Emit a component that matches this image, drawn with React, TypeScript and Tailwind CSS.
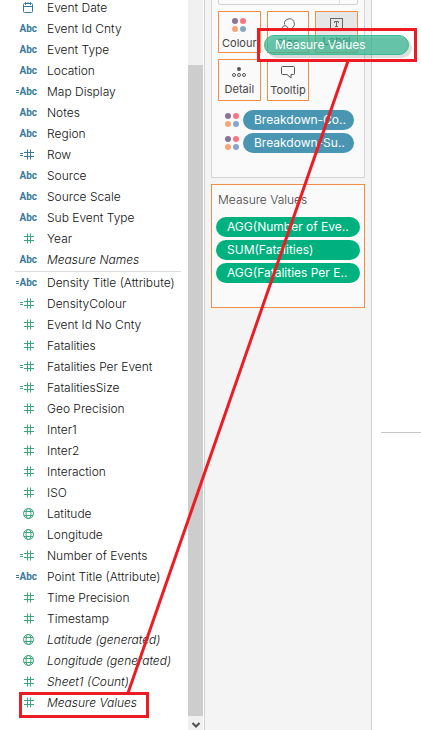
import type { ReactNode } from "react";

type IconKind = "date" | "abc" | "number" | "globe";

interface Field {
  name: string;
  icon: IconKind;
  tone?: "blue" | "green";
  calculated?: boolean;
  generated?: boolean;
}

const dimensions: Field[] = [
  { name: "Event Date", icon: "date" },
  { name: "Event Id Cnty", icon: "abc" },
  { name: "Event Type", icon: "abc" },
  { name: "Location", icon: "abc" },
  { name: "Map Display", icon: "abc", calculated: true },
  { name: "Notes", icon: "abc" },
  { name: "Region", icon: "abc" },
  { name: "Row", icon: "number", calculated: true },
  { name: "Source", icon: "abc" },
  { name: "Source Scale", icon: "abc" },
  { name: "Sub Event Type", icon: "abc" },
  { name: "Year", icon: "number", tone: "green" },
  { name: "Measure Names", icon: "abc", generated: true },
];

const measures: Field[] = [
  { name: "Density Title (Attribute)", icon: "abc", tone: "blue", calculated: true },
  { name: "DensityColour", icon: "number", calculated: true },
  { name: "Event Id No Cnty", icon: "number" },
  { name: "Fatalities", icon: "number" },
  { name: "Fatalities Per Event", icon: "number", calculated: true },
  { name: "FatalitiesSize", icon: "number", calculated: true },
  { name: "Geo Precision", icon: "number" },
  { name: "Inter1", icon: "number" },
  { name: "Inter2", icon: "number" },
  { name: "Interaction", icon: "number" },
  { name: "ISO", icon: "number" },
  { name: "Latitude", icon: "globe" },
  { name: "Longitude", icon: "globe" },
  { name: "Number of Events", icon: "number", calculated: true },
  { name: "Point Title (Attribute)", icon: "abc", tone: "blue", calculated: true },
  { name: "Time Precision", icon: "number" },
  { name: "Timestamp", icon: "number" },
  { name: "Latitude (generated)", icon: "globe", generated: true },
  { name: "Longitude (generated)", icon: "globe", generated: true },
  { name: "Sheet1 (Count)", icon: "number", generated: true },
  { name: "Measure Values", icon: "number", generated: true },
];

function EqualsMark() {
  return (
    <svg width="3" height="5" viewBox="0 0 3 5" fill="currentColor" aria-hidden="true">
      <path d="M0 1h3v1H0zM0 3h3v1H0z" />
    </svg>
  );
}

function FieldIcon({ icon }: { icon: IconKind }) {
  if (icon === "abc") {
    return <span className="font-[Roboto,sans-serif] text-[10px] leading-[21px] font-bold">Abc</span>;
  }
  if (icon === "date") {
    return (
      <svg className="mr-[3px]" width="11" height="11" viewBox="0 0 11 11" fill="none" stroke="currentColor" aria-hidden="true">
        <rect x="0.5" y="1.5" width="9" height="9" rx="1" />
        <path d="M0.5 4.5h9M2.5 0v3M5 0v2M7.5 0v3" />
      </svg>
    );
  }
  if (icon === "globe") {
    return (
      <svg className="mr-[3px]" width="11" height="11" viewBox="0 0 11 11" fill="none" stroke="currentColor" aria-hidden="true">
        <circle cx="5.5" cy="5.5" r="5" />
        <ellipse cx="5.5" cy="5.5" rx="2.4" ry="5" />
        <path d="M1 3.5h9M1 7.5h9" />
      </svg>
    );
  }
  return (
    <svg className="mr-[3px]" width="11" height="11" viewBox="0 0 11 11" fill="none" stroke="currentColor" aria-hidden="true">
      <path d="M4.5 0.5v10M7.5 0.5v10M1 3.5h10M1 7.5h10" />
    </svg>
  );
}

function FieldList({ label, fields, tone }: { label: string; fields: Field[]; tone: "blue" | "green" }) {
  return (
    <ul aria-label={label}>
      {fields.map((field) => (
        <li key={field.name} className="flex h-[21px] items-center gap-[10px] whitespace-nowrap">
          <span
            className={`flex w-[37px] shrink-0 items-center justify-end ${
              (field.tone ?? tone) === "blue" ? "text-[#38799a]" : "text-[#3ba57c]"
            }`}
          >
            {field.calculated && <EqualsMark />}
            <FieldIcon icon={field.icon} />
          </span>
          <span className={field.generated ? "italic" : ""}>{field.name}</span>
        </li>
      ))}
    </ul>
  );
}

function ColourDots() {
  return (
    <svg width="14" height="14" viewBox="0 0 14 14" aria-hidden="true">
      <circle cx="3" cy="3" r="3" fill="#8a7399" />
      <circle cx="11" cy="3" r="3" fill="#f9767f" />
      <circle cx="3" cy="11" r="3" fill="#f4a77c" />
      <circle cx="11" cy="11" r="3" fill="#86a6cd" />
    </svg>
  );
}

function MarkButton({ label, active, children }: { label: string; active?: boolean; children: ReactNode }) {
  return (
    <button
      type="button"
      className={`flex h-[42px] flex-col items-center border border-[#ee8e48] pt-[6px] text-[11px] font-normal text-[#444] ${
        active ? "bg-[#e6e6e6]" : "bg-[#fafafa]"
      }`}
    >
      <span className="flex h-[15px] items-center">{children}</span>
      <span className="leading-[22px]">{label}</span>
    </button>
  );
}

function Pill({ tone, children }: { tone: "blue" | "green"; children: ReactNode }) {
  return (
    <button
      type="button"
      className={`h-[20px] w-full truncate rounded-full pl-[11px] text-left leading-[20px] font-normal text-white ${
        tone === "blue" ? "bg-[#4996b2]" : "bg-[#00b180]"
      }`}
    >
      {children}
    </button>
  );
}

export default function App() {
  return (
    <div className="relative flex h-screen overflow-hidden bg-white font-[Inter,'Liberation_Sans',sans-serif] text-[12px] font-light text-[#111]">
      <section aria-label="Data" className="w-[188px] shrink-0 overflow-hidden">
        <div className="-mt-[3px]">
          <FieldList label="Dimensions" fields={dimensions} tone="blue" />
          <hr className="mt-px mr-[7px] ml-[15px] border-[#dcdcdc]" />
          <FieldList label="Measures" fields={measures} tone="green" />
        </div>
      </section>

      <div className="flex w-[15px] shrink-0 flex-col bg-[#f0f0f0] pt-[65px]">
        <div className="flex-1 bg-[#cdcdcd]" />
        <div className="flex h-[14px] items-center justify-center pt-[3px]">
          <svg width="8" height="6" viewBox="0 0 8 6" fill="none" stroke="#505050" strokeWidth="2" aria-hidden="true">
            <path d="M0.5 1L4 4.5L7.5 1" />
          </svg>
        </div>
      </div>

      <aside className="ml-px w-[168px] shrink-0 overflow-hidden border-x border-[#d0d0d0] bg-[#f4f4f4] px-[6px]">
        <section aria-label="Marks" className="flow-root h-[178px] border border-t-0 border-[#d4d4d4] bg-[#fafafa] px-[6px]">
          <div className="relative -mt-[19px] mb-[6px]">
            <select
              aria-label="Mark type"
              className="block h-[24px] w-full appearance-none rounded-[2px] border border-[#d0d0d0] bg-[#fafafa] px-2"
            />
            <span className="absolute top-0 right-[18px] h-[23px] w-px bg-[#e0e0e0]" />
          </div>
          <div className="grid grid-cols-3 gap-x-[6px] gap-y-[6px]">
            <MarkButton label="Colour">
              <ColourDots />
            </MarkButton>
            <MarkButton label="Size">
              <svg width="14" height="14" viewBox="0 0 14 14" fill="none" stroke="#666" aria-hidden="true">
                <path d="M3.500 6.500A5 5 0 1 1 11.500 9.800L13.500 11" />
                <path d="M1.600 12.500a3 3 0 1 1 4.800 0" />
              </svg>
            </MarkButton>
            <MarkButton label="Label" active>
              <svg width="13" height="12" viewBox="0 0 13 12" fill="none" stroke="#666" aria-hidden="true">
                <rect x="0.5" y="0.5" width="12" height="11" />
                <path d="M4.5 5V3.5h4V5M6.5 3.5v5M5 8.5h3" />
              </svg>
            </MarkButton>
            <MarkButton label="Detail">
              <svg width="14" height="12" viewBox="0 0 14 12" fill="none" stroke="#555" aria-hidden="true">
                <circle cx="7" cy="3" r="2" fill="#555" stroke="none" />
                <circle cx="2" cy="9" r="1.5" />
                <circle cx="7" cy="9" r="1.5" />
                <circle cx="12" cy="9" r="1.5" />
              </svg>
            </MarkButton>
            <MarkButton label="Tooltip">
              <svg width="14" height="13" viewBox="0 0 14 13" fill="none" stroke="#555" aria-hidden="true">
                <path d="M1.5 0.5h11a1 1 0 0 1 1 1v6a1 1 0 0 1-1 1h-2.500v3.500l-4-3.500h-4.500a1 1 0 0 1-1-1v-6a1 1 0 0 1 1-1z" />
              </svg>
            </MarkButton>
          </div>
          <ul className="mt-[9px] flex flex-col gap-[3px] pr-[4px] pl-[7px]">
            {["Breakdown-Co..", "Breakdown-Su.."].map((name) => (
              <li key={name} className="grid grid-cols-[14px_1fr] items-center gap-[4px]">
                <ColourDots />
                <Pill tone="blue">{name}</Pill>
              </li>
            ))}
          </ul>
        </section>

        <section aria-labelledby="measure-values" className="mt-[6px] h-[124px] border border-[#ee8e48] bg-[#fafafa] px-[4px] pt-[5px]">
          <h2 id="measure-values" className="px-[2px] leading-[20px] font-light text-[#444]">
            Measure Values
          </h2>
          <ul className="mt-[7px] flex flex-col gap-[3px]">
            {["AGG(Number of Eve..", "SUM(Fatalities)", "AGG(Fatalities Per E.."].map((name) => (
              <li key={name}>
                <Pill tone="green">{name}</Pill>
              </li>
            ))}
          </ul>
        </section>
      </aside>

      <main className="min-w-0 flex-1 pt-[432px] pl-[9px]">
        <hr className="border-[#c8c8c8]" />
      </main>

      <div className="absolute top-[38px] left-[267px] h-[20px] w-[145px] rounded-full bg-black/12" />
      <div className="absolute top-[35px] left-[264px] h-[20px] w-[145px] rounded-full border border-[#3dbb98] bg-[#3cba94]/75 pl-[10px] leading-[18px] font-normal text-white">
        Measure Values
      </div>
      <svg className="pointer-events-none absolute top-0 left-0" width="421" height="730" viewBox="0 0 421 730" fill="none" stroke="#ed1c24" strokeWidth="3" aria-hidden="true">
        <rect x="258.500" y="29.500" width="157" height="31" />
        <rect x="20.500" y="693.500" width="127" height="23" />
        <path d="M348 61L128 693" />
      </svg>
    </div>
  );
}
